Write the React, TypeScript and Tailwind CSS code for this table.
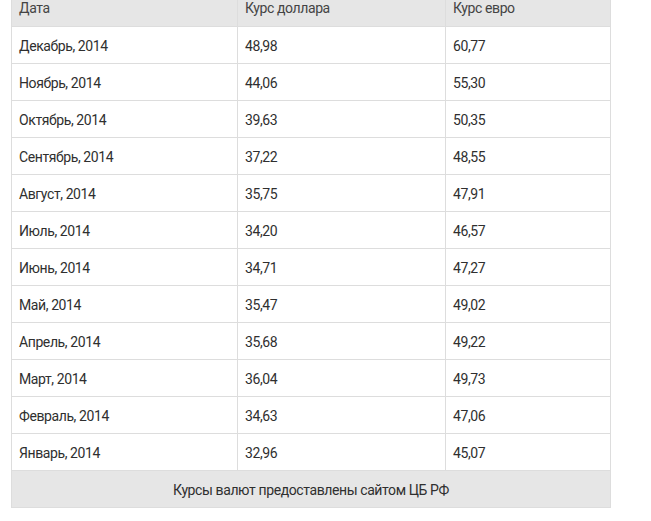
const ROWS = [
  { date: "Декабрь, 2014", usd: "48,98", eur: "60,77" },
  { date: "Ноябрь, 2014", usd: "44,06", eur: "55,30" },
  { date: "Октябрь, 2014", usd: "39,63", eur: "50,35" },
  { date: "Сентябрь, 2014", usd: "37,22", eur: "48,55" },
  { date: "Август, 2014", usd: "35,75", eur: "47,91" },
  { date: "Июль, 2014", usd: "34,20", eur: "46,57" },
  { date: "Июнь, 2014", usd: "34,71", eur: "47,27" },
  { date: "Май, 2014", usd: "35,47", eur: "49,02" },
  { date: "Апрель, 2014", usd: "35,68", eur: "49,22" },
  { date: "Март, 2014", usd: "36,04", eur: "49,73" },
  { date: "Февраль, 2014", usd: "34,63", eur: "47,06" },
  { date: "Январь, 2014", usd: "32,96", eur: "45,07" },
];

const font = { fontFamily: '"Roboto", "Liberation Sans", sans-serif' };

export default function App() {
  return (
    <div className="min-h-[521px] bg-white overflow-hidden text-[14px] tracking-[-0.4px] text-[#2f2f2f]" style={font}>
      <div className="ml-[11px] -mt-[11px] w-[600px] border-x border-[#dddddd]">
        {/* Header */}
        <div className="grid grid-cols-[226px_208px_164px] h-[38px] bg-[#e6e6e6] border-b border-[#dddddd]">
          <div className="flex items-center px-[7px] pt-[2px] border-r border-[#dddddd] text-[#444]">Дата</div>
          <div className="flex items-center px-[7px] pt-[2px] border-r border-[#dddddd] text-[#444]">Курс доллара</div>
          <div className="flex items-center px-[7px] pt-[2px] text-[#444]">Курс евро</div>
        </div>

        {ROWS.map((r) => (
          <div key={r.date} className="grid grid-cols-[226px_208px_164px] h-[37px] border-b border-[#dddddd]">
            <div className="flex items-center px-[7px] pt-[2px] border-r border-[#dddddd]">{r.date}</div>
            <div className="flex items-center px-[7px] pt-[2px] border-r border-[#dddddd]">{r.usd}</div>
            <div className="flex items-center px-[7px] pt-[2px]">{r.eur}</div>
          </div>
        ))}

        {/* Footer */}
        <div className="h-[37px] flex items-center justify-center pt-[2px] bg-[#e6e6e6] border-b border-[#dddddd]">
          Курсы валют предоставлены сайтом ЦБ РФ
        </div>
      </div>
    </div>
  );
}
